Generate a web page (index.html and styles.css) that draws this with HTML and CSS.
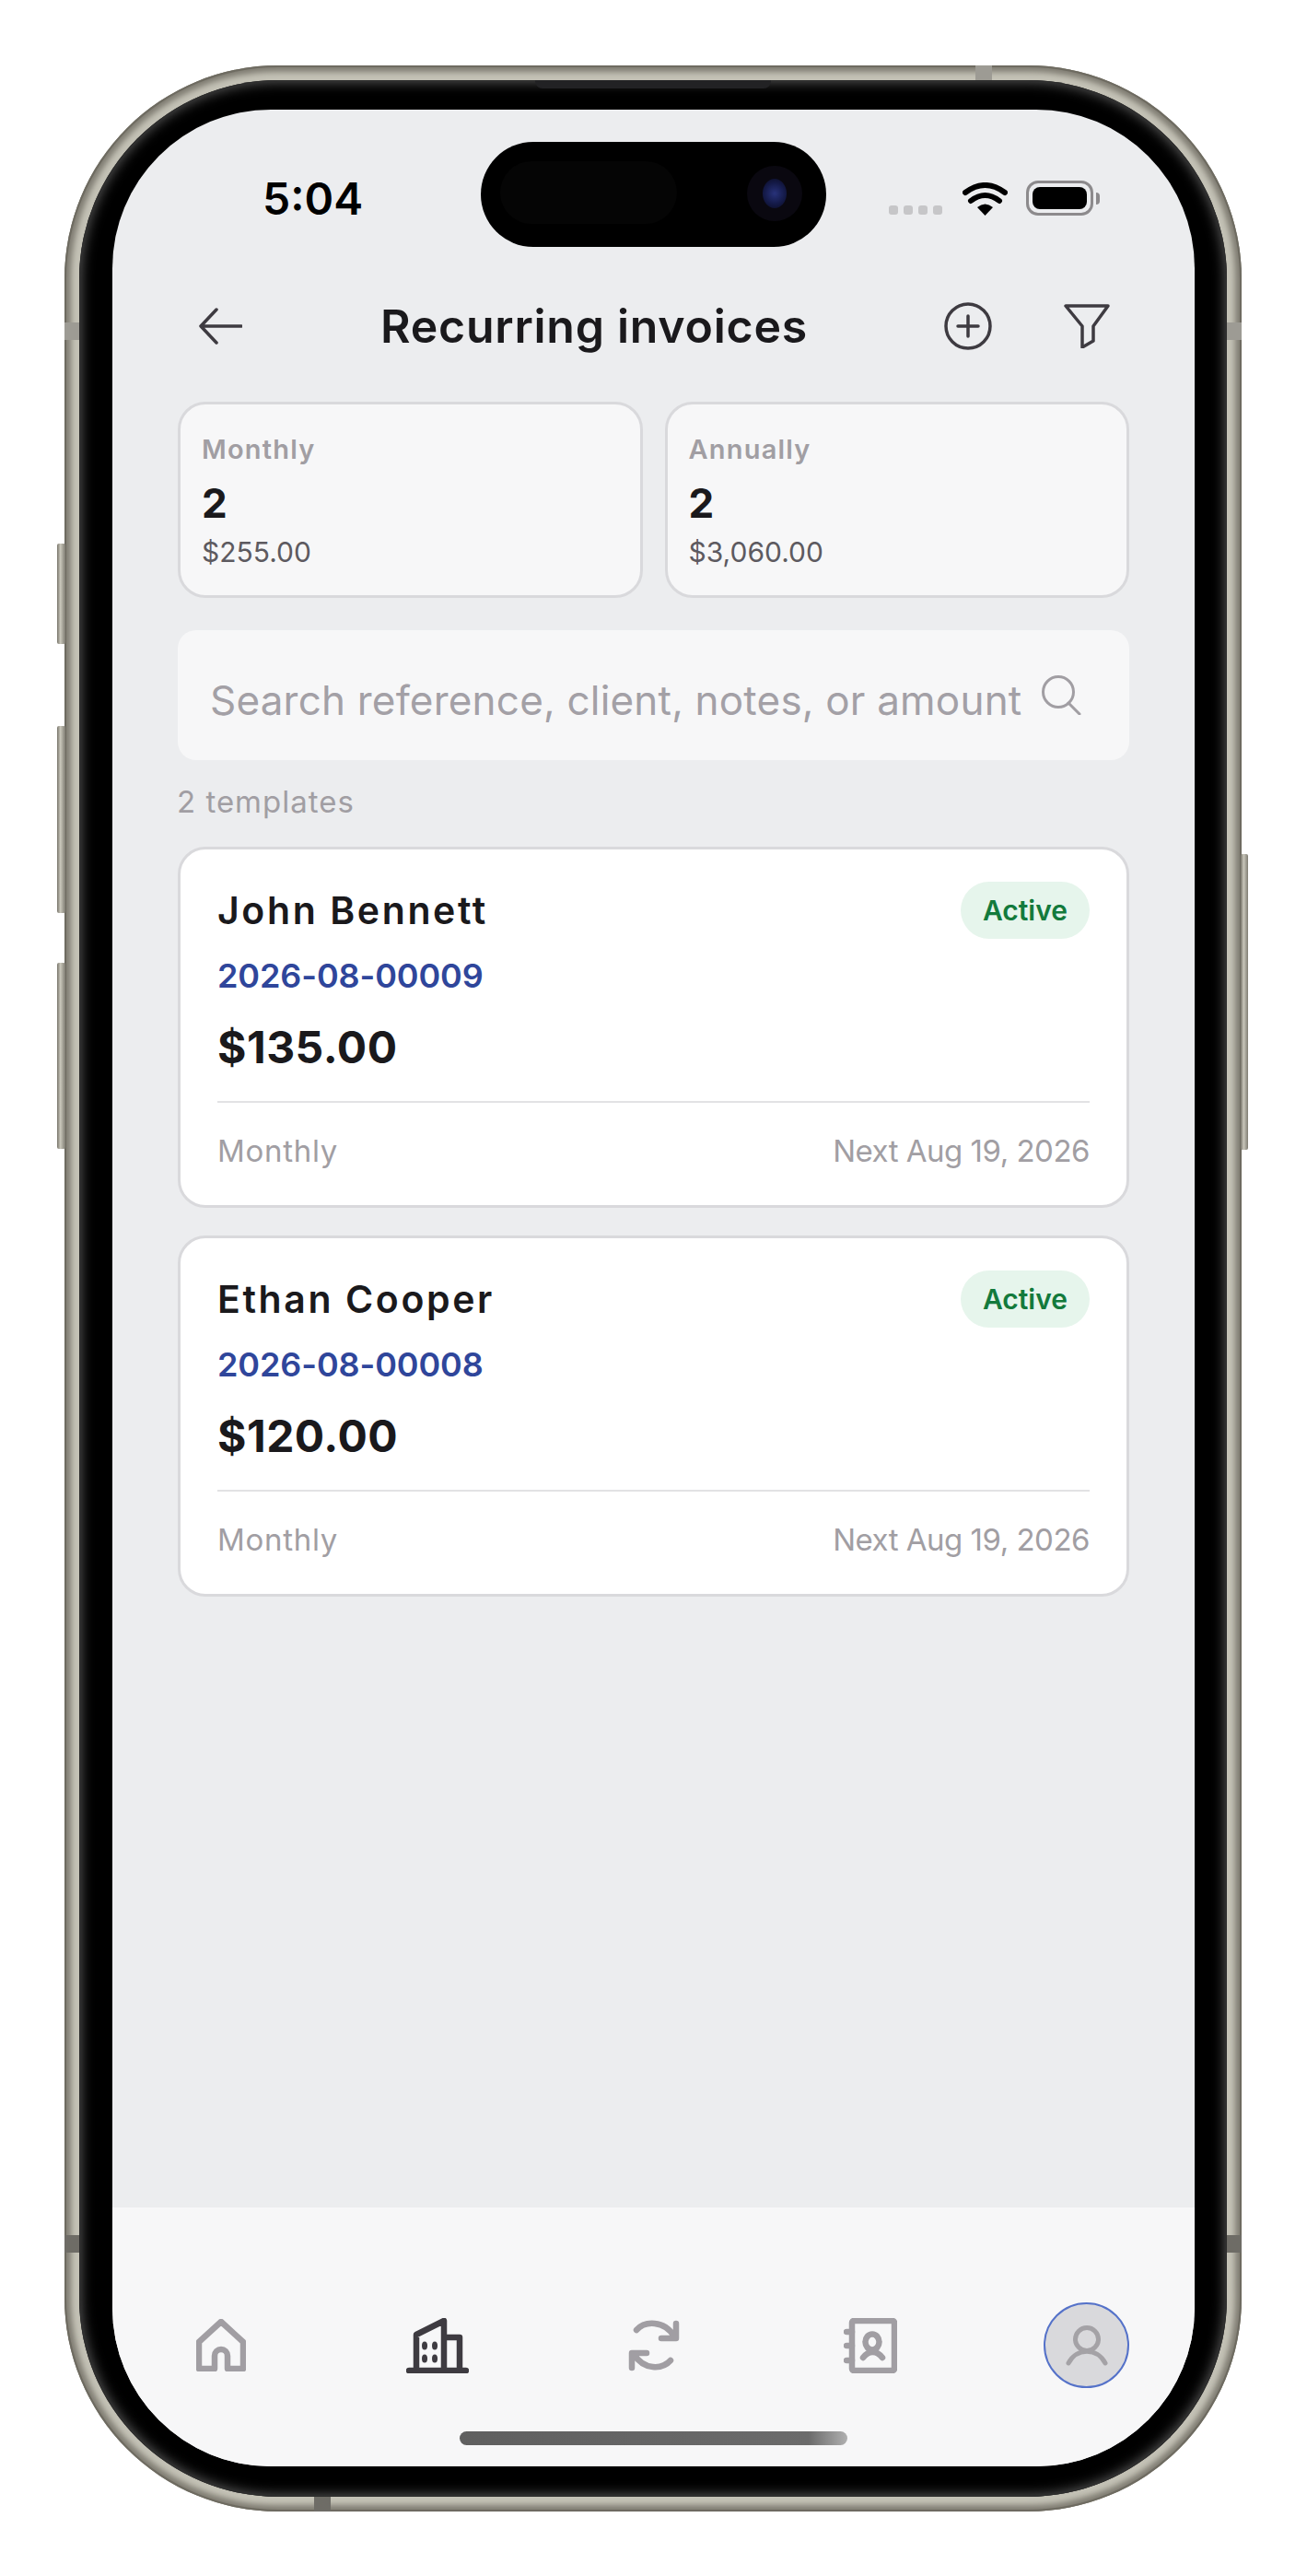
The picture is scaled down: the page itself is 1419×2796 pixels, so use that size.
FILE: index.html
```html
<!DOCTYPE html>
<html lang="en">
<head>
<meta charset="utf-8">
<title>Recurring invoices</title>
<link rel="stylesheet" href="styles.css">
</head>
<body>
<div class="phone">
  <span class="btn btn-a"></span><span class="btn btn-b"></span><span class="btn btn-c"></span><span class="btn btn-r"></span>
  <span class="band band-t"></span><span class="band band-l1"></span><span class="band band-r1"></span><span class="band band-l2"></span><span class="band band-r2"></span><span class="band band-b"></span>
  <div class="bezel">
    <span class="speaker"></span>
    <main class="screen">
      <div class="island"><span class="island-sensor"></span><span class="island-cam"><span class="island-lens"></span></span></div>
      <div class="status">
        <span class="time">5:04</span>
        <div class="status-icons">
          <div class="cell"><i></i><i></i><i></i><i></i></div>
          <svg class="wifi" viewBox="0 0 49 36" width="49" height="36"><path class="wf" d="M24.5 36 16 27q8.500-7 17 0Z"/><path class="ws" d="M9 20q15.500-12 31 0M3 11q21.500-16 43 0"/></svg>
          <div class="battery"><span class="battery-level"></span></div>
          <span class="battery-nub"></span>
        </div>
      </div>
      <header class="header">
        <svg class="i-back" viewBox="0 0 48 42" width="48" height="42"><path d="M47 21H3M20 3 3 21l17 18"/></svg>
        <h1 class="title">Recurring invoices</h1>
        <div class="actions">
          <svg class="i-line" viewBox="0 0 52 52" width="52" height="52"><circle cx="26" cy="26" r="24"/><path d="M15 26h22M26 15v22"/></svg>
          <svg class="i-line" viewBox="0 0 52 48" width="52" height="48"><path d="M3 2h46L33 24v16l-12 7V24Z"/></svg>
        </div>
      </header>
      <section class="stats">
        <div class="stat"><div class="stat-label">Monthly</div><div class="stat-num">2</div><div class="stat-amt">$255.00</div></div>
        <div class="stat"><div class="stat-label">Annually</div><div class="stat-num">2</div><div class="stat-amt">$3,060.00</div></div>
      </section>
      <div class="search">
        <span class="search-text">Search reference, client, notes, or amount</span>
        <svg class="i-search" viewBox="0 0 44 43" width="44" height="43"><circle cx="19" cy="18" r="16.500"/><path d="M30 30l12 12"/></svg>
      </div>
      <div class="count">2 templates</div>
      <section class="cards">
        <article class="card">
          <div class="card-top"><div class="name">John Bennett</div><div class="pill">Active</div></div>
          <div class="ref">2026-08-00009</div>
          <div class="amount">$135.00</div>
          <div class="card-foot"><span class="cycle">Monthly</span><span class="next">Next Aug 19, 2026</span></div>
        </article>
        <article class="card">
          <div class="card-top"><div class="name">Ethan Cooper</div><div class="pill">Active</div></div>
          <div class="ref">2026-08-00008</div>
          <div class="amount">$120.00</div>
          <div class="card-foot"><span class="cycle">Monthly</span><span class="next">Next Aug 19, 2026</span></div>
        </article>
      </section>
      <nav class="nav">
        <div class="nav-item"><svg class="i-nav" viewBox="0 0 54 57" width="54" height="57"><path d="M3 54V25L27 3l24 22v29H34V40a7 7 0 0 0-14 0v14Z"/></svg></div>
        <div class="nav-item"><svg class="i-nav active" viewBox="0 0 68 60" width="68" height="60"><path d="M3 57h62M11 57V18l30-15v54M41 21h17v36"/><ellipse class="dot" cx="20" cy="30" rx="3" ry="4.500"/><ellipse class="dot" cx="31" cy="30" rx="3" ry="4.500"/><ellipse class="dot" cx="20" cy="44" rx="3" ry="4.500"/><ellipse class="dot" cx="31" cy="44" rx="3" ry="4.500"/></svg></div>
        <div class="nav-item"><svg class="i-nav" viewBox="0 0 56 56" width="56" height="56"><path d="M9 11C18 1 39 0 50 18M52 4v16H36M46 44c-9 10-29 11-40-7M4 52V36h16"/></svg></div>
        <div class="nav-item"><svg class="i-nav" viewBox="0 0 58 60" width="58" height="60"><rect x="9" y="3" width="46" height="54" rx="2"/><path d="M3 15h6M3 30h6M3 46h6M21 43c6-8 15-8 21 0"/><ellipse cx="31" cy="26" rx="7.500" ry="8.500"/></svg></div>
        <div class="nav-item"><div class="avatar"><svg class="i-avatar" viewBox="0 0 46 44" width="46" height="44"><circle cx="23" cy="15" r="12.500"/><path d="M3 41c9-17 31-17 40 0"/></svg></div></div>
      </nav>
      <span class="home-bar"></span>
    </main>
  </div>
</div>
</body>
</html>
```
FILE: styles.css
```css
* { box-sizing: border-box; }
html, body { margin: 0; padding: 0; background: #fff; }
body { font-family: "Inter", "Liberation Sans", sans-serif; color: #1a191c; height: 2796px; overflow: hidden; }

.phone {
  position: relative;
  width: 1278px;
  height: 2655px;
  margin: 71px 0 0 70px;
  padding: 16px;
  border-radius: 232px;
  background: #c4c2b6;
  box-shadow: inset 0 0 0 2px #6e6b61, inset 0 0 6px 7px #7f7c72;
}
.btn { position: absolute; background: linear-gradient(90deg, #77746a, #c9c7bb 40%, #7f7c72); border-radius: 2px; }
.btn-a { left: -8px; top: 519px; width: 9px; height: 109px; }
.btn-b { left: -8px; top: 717px; width: 9px; height: 203px; }
.btn-c { left: -8px; top: 974px; width: 9px; height: 202px; }
.btn-r { right: -7px; top: 856px; width: 8px; height: 321px; }
.band { position: absolute; background: #9d9b94; }
.band-t { left: 989px; top: 0; width: 18px; height: 16px; }
.band-l1 { left: 0; top: 279px; width: 16px; height: 19px; }
.band-r1 { right: 0; top: 279px; width: 16px; height: 19px; }
.band-l2 { left: 0; top: 2355px; width: 16px; height: 19px; background: #6e6c66; }
.band-r2 { right: 0; top: 2355px; width: 16px; height: 19px; background: #6e6c66; }
.band-b { left: 271px; bottom: 0; width: 18px; height: 16px; background: #6e6c66; }

.bezel {
  position: relative;
  width: 100%;
  height: 100%;
  padding: 32px 35px 33px 36px;
  background: #000;
  border-radius: 216px;
  box-shadow: inset 0 0 0 1px #2c2c2c, inset 0 0 14px 2px #5a5a5a;
}
.speaker { position: absolute; left: 495px; top: 0; width: 256px; height: 9px; background: #222224; border-radius: 0 0 8px 8px; }

.screen {
  position: relative;
  display: flex;
  flex-direction: column;
  width: 100%;
  height: 100%;
  background: #ecedef;
  border-radius: 172px;
  overflow: hidden;
}
.island { position: absolute; left: 400px; top: 35px; width: 375px; height: 114px; border-radius: 57px; background: #000; }
.island-sensor { position: absolute; left: 21px; top: 21px; width: 192px; height: 68px; border-radius: 34px; background: #050505; }
.island-cam { position: absolute; left: 289px; top: 26px; width: 60px; height: 60px; border-radius: 50%; background: #0a0810; }
.island-lens { position: absolute; left: 17px; top: 14px; width: 26px; height: 32px; border-radius: 50%; background: radial-gradient(circle, #28327a 0, #141a48 55%, #0a0a1e 100%); }

.status { height: 160px; padding: 72px 0 0 163px; display: flex; align-items: flex-start; }
.time { font-size: 48px; line-height: 50px; font-weight: 600; color: #000; }
.status-icons { position: absolute; left: 843px; top: 77px; display: flex; align-items: flex-end; }
.cell { display: flex; gap: 6px; margin-right: 22px; margin-bottom: 1px; }
.cell i { display: block; width: 10px; height: 10px; border-radius: 3px; background: #c6c6c8; }
.wifi { margin-right: 20px; }
.wf { fill: #000; }
.ws { fill: none; stroke: #000; stroke-width: 6; }
.battery { width: 73px; height: 38px; padding: 4px; border: 3px solid #8c8a8c; border-radius: 13px; }
.battery-level { display: block; width: 100%; height: 100%; background: #000; border-radius: 8px; }
.battery-nub { width: 4px; height: 13px; margin: 0 0 12px 3px; background: #8c8a8c; border-radius: 0 4px 4px 0; }

.header { height: 150px; padding: 0 91px 0 93px; display: flex; align-items: center; }
.title { margin: 0 0 0 150px; font-size: 50px; line-height: 60px; font-weight: 600; color: #1a191c; letter-spacing: 0.75px; }
.actions { margin-left: auto; display: flex; align-items: center; gap: 77px; }
svg path, svg circle, svg rect, svg ellipse { stroke-linecap: round; stroke-linejoin: round; }
.i-back, .i-line { fill: none; stroke: #3e3b41; stroke-width: 3.500; }

.stats { margin: 7px 71px 0; display: grid; grid-template-columns: 1fr 1fr; gap: 24px; }
.stat { height: 213px; padding: 29px 23px 0; background: #f7f7f8; border: 3px solid #d9d9dc; border-radius: 30px; }
.stat-label { font-size: 29px; line-height: 40px; font-weight: 600; color: #a19ea3; letter-spacing: 1.2px; }
.stat-num { margin-top: 13px; font-size: 44px; line-height: 50px; font-weight: 700; color: #1a191c; }
.stat-amt { margin-top: 9px; font-size: 30px; line-height: 38px; color: #5d5a60; }

.search { margin: 35px 71px 0; height: 141px; padding: 0 52px 0 35px; display: flex; align-items: center; justify-content: space-between; background: #f7f7f8; border-radius: 20px; }
.search-text { font-size: 44px; line-height: 60px; padding-top: 10px; color: #a3a0a6; white-space: nowrap; letter-spacing: 0.2px; }
.i-search { fill: none; stroke: #a19ea3; stroke-width: 3; margin-top: -1px; }

.count { margin: 25px 71px 0 70px; font-size: 33px; line-height: 40px; color: #a19ea3; letter-spacing: 1px; }

.cards { margin: 29px 71px 0; display: flex; flex-direction: column; gap: 30px; }
.card { height: 392px; padding: 35px 40px 0; background: #fff; border: 3px solid #d9d9dc; border-radius: 30px; }
.card-top { display: flex; justify-content: space-between; align-items: center; }
.name { font-size: 41px; line-height: 50px; font-weight: 600; color: #1a191c; letter-spacing: 2.6px; }
.pill { height: 62px; padding: 0 24px; display: flex; align-items: center; border-radius: 31px; background: #e6f5ec; color: #137a3c; font-size: 30px; font-weight: 600; }
.ref { margin-top: 18px; font-size: 36px; line-height: 44px; font-weight: 600; color: #2f469b; letter-spacing: -0.1px; }
.amount { margin-top: 26px; font-size: 48px; line-height: 60px; font-weight: 700; color: #1a191c; letter-spacing: 0.5px; }
.card-foot { margin-top: 28px; padding-top: 30px; border-top: 2px solid #e2e2e4; display: flex; justify-content: space-between; font-size: 33px; line-height: 44px; color: #a19ea3; }
.cycle { letter-spacing: 0.7px; }
.next { letter-spacing: -0.5px; }

.nav { margin-top: auto; height: 281px; padding-top: 103px; display: grid; grid-template-columns: repeat(5, 1fr); align-items: start; background: #f7f7f8; }
.nav-item { height: 93px; display: flex; align-items: center; justify-content: center; }
.i-nav { fill: none; stroke: #a19ea3; stroke-width: 6.500; }
.i-nav.active { stroke: #3e3b41; }
.dot { fill: #3e3b41; stroke: none; }
.avatar { width: 93px; height: 93px; display: flex; align-items: center; justify-content: center; background: #d9d9dc; border: 2px solid #5572c9; border-radius: 50%; }
.i-avatar { fill: none; stroke: #a4a2a6; stroke-width: 5; }
.home-bar { position: absolute; left: 377px; bottom: 23px; width: 421px; height: 15px; border-radius: 8px; background: linear-gradient(90deg, #5f5f5f 0, #6b6b6b 90%, #b0b0b0 100%); }
```
